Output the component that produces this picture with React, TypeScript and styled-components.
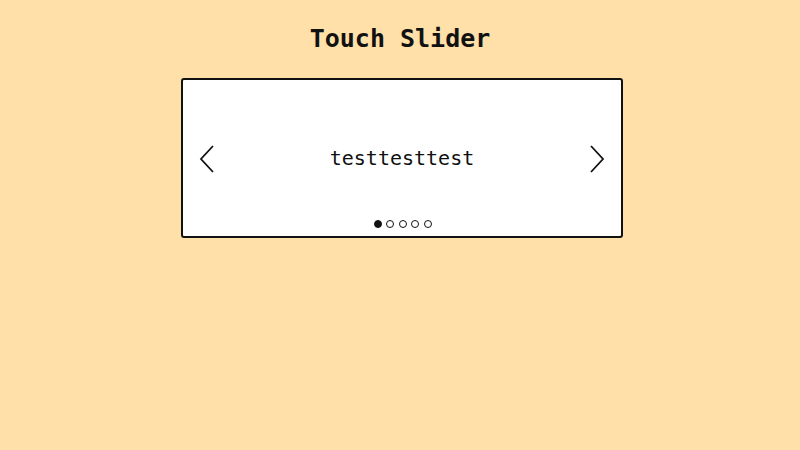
import React, { useState } from "react";
import styled, { createGlobalStyle } from "styled-components";

const GlobalStyle = createGlobalStyle`
  html, body {
    margin: 0;
    padding: 0;
    background: #ffe0a8;
    font-family: "DejaVu Sans Mono", "Liberation Mono", monospace;
  }
`;

const Page = styled.div`
  min-height: 450px;
  box-sizing: border-box;
  display: flex;
  flex-direction: column;
  align-items: center;
  padding-top: 24px;
`;

const Title = styled.h1`
  margin: 0;
  font-size: 25px;
  line-height: 30px;
  font-weight: bold;
  color: #111;
`;

const Slider = styled.div`
  margin-top: 24px;
  margin-left: 4px;
  width: 442px;
  height: 160px;
  box-sizing: border-box;
  border: 2px solid #111;
  border-radius: 3px;
  background: #fff;
  display: grid;
  grid-template-columns: 48px 1fr 48px;
  grid-template-rows: 1fr auto;
`;

const Arrow = styled.button<{ $side: "left" | "right" }>`
  grid-row: 1;
  grid-column: ${(p) => (p.$side === "left" ? 1 : 3)};
  border: none;
  background: none;
  padding: 18px 0 0;
  display: flex;
  align-items: center;
  justify-content: center;
  cursor: pointer;
`;

const Slide = styled.div`
  grid-row: 1;
  grid-column: 2;
  display: flex;
  align-items: center;
  justify-content: center;
  padding-top: 16px;
  font-size: 20px;
  color: #111;
`;

const Dots = styled.div`
  grid-row: 2;
  grid-column: 1 / 4;
  display: flex;
  justify-content: center;
  gap: 4.5px;
  padding-bottom: 8px;
  margin-left: 1px;
`;

const Dot = styled.span<{ $active: boolean }>`
  width: 8px;
  height: 8px;
  box-sizing: border-box;
  border-radius: 50%;
  border: 1.5px solid #111;
  background: ${(p) => (p.$active ? "#111" : "#fff")};
`;

const slides = ["testtesttest", "slide two", "slide three", "slide four", "slide five"];

const Chevron = ({ dir }: { dir: "left" | "right" }) => (
  <svg width="18" height="30" viewBox="0 0 18 30" fill="none">
    <path
      d={dir === "left" ? "M15 2 L3 15 L15 28" : "M3 2 L15 15 L3 28"}
      stroke="#111"
      strokeWidth="1.8"
    />
  </svg>
);

export default function App() {
  const [index, setIndex] = useState(0);
  const go = (d: number) => setIndex((i) => (i + d + slides.length) % slides.length);

  return (
    <>
      <GlobalStyle />
      <Page>
        <Title>Touch Slider</Title>
        <Slider>
          <Arrow $side="left" onClick={() => go(-1)}>
            <Chevron dir="left" />
          </Arrow>
          <Slide>{slides[index]}</Slide>
          <Arrow $side="right" onClick={() => go(1)}>
            <Chevron dir="right" />
          </Arrow>
          <Dots>
            {slides.map((s, i) => (
              <Dot key={s} $active={i === index} onClick={() => setIndex(i)} />
            ))}
          </Dots>
        </Slider>
      </Page>
    </>
  );
}
